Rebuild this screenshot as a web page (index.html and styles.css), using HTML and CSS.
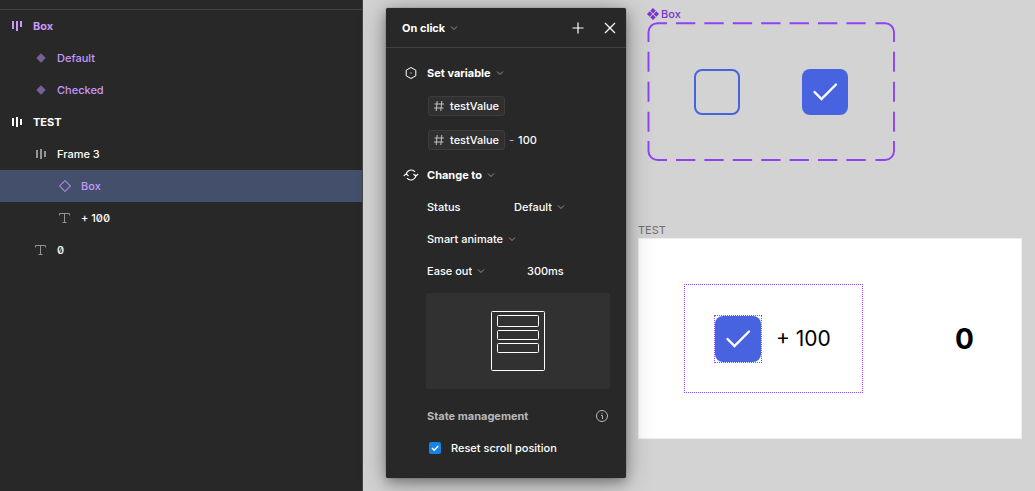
FILE: index.html
```html
<!DOCTYPE html>
<html lang="en">
<head>
<meta charset="utf-8">
<title>Prototype interaction</title>
<link rel="stylesheet" href="styles.css">
</head>
<body>
<svg class="defs" aria-hidden="true">
  <symbol id="chevron" viewBox="0 0 8 8"><path d="M1 2.5 4 5.5 7 2.5" fill="none" stroke="currentColor"/></symbol>
  <symbol id="bars-top" viewBox="0 0 16 16"><path d="M3 3h2v8H3zM7 3h2v10H7zM11 3h2v6h-2z" fill="currentColor"/></symbol>
  <symbol id="bars-mid" viewBox="0 0 16 16"><path d="M3 4h2v8H3zM7 3h2v10H7zM11 5h2v6h-2z" fill="currentColor"/></symbol>
  <symbol id="variant" viewBox="0 0 16 16"><path d="M8 3.3 12.7 8 8 12.7 3.3 8z" fill="currentColor"/></symbol>
  <symbol id="instance" viewBox="0 0 16 16"><path d="M8 2.6 13.4 8 8 13.4 2.6 8z" fill="none" stroke="currentColor" stroke-width="1.2"/></symbol>
  <symbol id="type" viewBox="0 0 16 16"><path d="M2.5 5.500v-2h10v2M7.500 3.500v9M5.500 12.500h4" fill="none" stroke="currentColor"/></symbol>
  <symbol id="number" viewBox="0 0 12 12"><path d="M4.2 1 3.2 11M8.8 1 7.8 11M1.5 4h9.5M1 8h9.5" fill="none" stroke="currentColor"/></symbol>
  <symbol id="tick" viewBox="0 0 46 46"><path d="m12.500 23 7 7L34 15.500" fill="none" stroke="#fff" stroke-width="2.400" stroke-linecap="round"/></symbol>
</svg>

<aside class="layers">
  <ul class="layer-list">
    <li class="layer component strong"><svg class="icon"><use href="#bars-top"/></svg><span>Box</span></li>
    <li class="layer component level-1"><svg class="icon dim"><use href="#variant"/></svg><span>Default</span></li>
    <li class="layer component level-1"><svg class="icon dim"><use href="#variant"/></svg><span>Checked</span></li>
    <li class="layer strong"><svg class="icon"><use href="#bars-mid"/></svg><span>TEST</span></li>
    <li class="layer level-1"><svg class="icon dim"><use href="#bars-mid"/></svg><span>Frame 3</span></li>
    <li class="layer component level-2 selected"><svg class="icon dim"><use href="#instance"/></svg><span>Box</span></li>
    <li class="layer level-2"><svg class="icon dim"><use href="#type"/></svg><span>+ 100</span></li>
    <li class="layer level-1"><svg class="icon dim"><use href="#type"/></svg><span>0</span></li>
  </ul>
</aside>

<main class="canvas">
  <section class="node set-node">
    <h2 class="node-label set-label">
      <svg class="set-icon" viewBox="0 0 12 12"><path d="M6 .2 8.500 2.700 6 5.200 3.500 2.700zM6 6.800l2.500 2.500L6 11.800 3.500 9.300zM2.700 3.500 5.200 6 2.700 8.500.2 6zM9.300 3.500 11.800 6 9.300 8.500 6.800 6z" fill="currentColor" stroke="currentColor" stroke-width=".4"/></svg>
      Box
    </h2>
    <div class="component-set">
      <svg class="set-outline" viewBox="0 0 249 140" fill="none" stroke="#8f42f2" stroke-width="1.900">
        <path d="M1.500 20V10A9 9 0 0 1 10.500 1.200H20M228.500 1.200H238A9 9 0 0 1 247 10V20M247 119V129A9 9 0 0 1 238 138H228.500M20 138H10.500A9 9 0 0 1 1.500 129V119"/>
        <path d="M29 1.200H219M29 138H219" stroke-dasharray="19.300 9.100"/>
        <path d="M1.500 29.700V111M247 29.700V111" stroke-dasharray="20 10"/>
      </svg>
      <div class="box"></div>
      <div class="box checked"><svg viewBox="0 0 46 46"><use href="#tick"/></svg></div>
    </div>
  </section>

  <section class="node frame-node">
    <h2 class="node-label">TEST</h2>
    <div class="frame">
      <div class="group">
        <div class="highlight"><div class="box checked"><svg viewBox="0 0 46 46"><use href="#tick"/></svg></div></div>
        <span class="amount">+ 100</span>
      </div>
      <span class="total">0</span>
    </div>
  </section>
</main>

<form class="dialog">
  <header class="dialog-head">
    <label class="picker strong"><select aria-label="Trigger"><option>On click</option></select><svg class="chevron"><use href="#chevron"/></svg></label>
    <button class="icon-button add" type="button" aria-label="Add action"><svg viewBox="0 0 16 16"><path d="M8 2.500v11M2.500 8h11" stroke="currentColor" stroke-width="1.200"/></svg></button>
    <button class="icon-button" type="button" aria-label="Close"><svg viewBox="0 0 16 16"><path d="m3 3 10 10M13 3 3 13" stroke="currentColor" stroke-width="1.200"/></svg></button>
  </header>
  <div class="dialog-body">
    <div class="row action">
      <svg class="icon" viewBox="0 0 16 16" fill="none" stroke="currentColor"><path d="M8 2.500 12.800 5.200v5.600L8 13.500 3.200 10.800V5.200z"/><path d="M7.500 7.500h1v1h-1z" fill="currentColor" stroke="none"/></svg>
      <label class="picker strong"><select aria-label="First action"><option>Set variable</option></select><svg class="chevron"><use href="#chevron"/></svg></label>
    </div>
    <div class="row expression">
      <button class="chip" type="button"><svg><use href="#number"/></svg>testValue</button>
    </div>
    <div class="row expression">
      <button class="chip" type="button"><svg><use href="#number"/></svg>testValue</button>
      <span class="operator">-</span>
      <span>100</span>
    </div>
    <div class="row action change">
      <svg class="icon" viewBox="0 0 16 16" fill="none" stroke="currentColor" stroke-width="1.100"><path d="M3.200 8V7.500A5 5 0 0 1 12 4.800M12.800 7.500V8A5 5 0 0 1 4 11.200M.8 9 3.200 6.700 5.500 9M15.200 7 12.800 9.300 10.500 7"/></svg>
      <label class="picker strong"><select aria-label="Second action"><option>Change to</option></select><svg class="chevron"><use href="#chevron"/></svg></label>
    </div>
    <div class="row fields">
      <label for="status">Status</label>
      <label class="picker"><select id="status"><option>Default</option></select><svg class="chevron"><use href="#chevron"/></svg></label>
    </div>
    <div class="row fields">
      <label class="picker"><select aria-label="Animation"><option>Smart animate</option></select><svg class="chevron"><use href="#chevron"/></svg></label>
    </div>
    <div class="row fields">
      <label class="picker"><select aria-label="Easing"><option>Ease out</option></select><svg class="chevron"><use href="#chevron"/></svg></label>
      <input class="duration" type="text" aria-label="Duration" value="300ms">
    </div>
    <div class="preview">
      <svg viewBox="0 0 54 60" fill="none" stroke="#fff"><rect x=".5" y=".5" width="53" height="59" rx="1"/><rect x="6.500" y="4.500" width="41" height="11" rx="1"/><rect x="6.500" y="19.500" width="41" height="9" rx="1"/><rect x="6.500" y="32.500" width="41" height="9" rx="1"/></svg>
    </div>
    <div class="row state">
      <h3>State management</h3>
      <button class="info" type="button" aria-label="About state management"><svg viewBox="0 0 16 16" fill="none" stroke="currentColor"><circle cx="8" cy="8" r="5.500"/><path d="M7 7.500h1.500V11M7.500 5.500h1"/></svg></button>
    </div>
    <label class="row reset">
      <span class="check"><input type="checkbox" checked><svg viewBox="0 0 12 12"><path d="m3 6 2.200 2.200L9.300 4" fill="none" stroke="#fff" stroke-width="1.500"/></svg></span>
      Reset scroll position
    </label>
  </div>
</form>
</body>
</html>
```
FILE: styles.css
```css
* { box-sizing: border-box; }

body {
  display: flex;
  position: relative;
  min-height: 100vh;
  margin: 0;
  overflow: hidden;
  background: #d3d3d3;
  color: #fff;
  font: 500 11px/16px Inter, sans-serif;
}

svg { display: block; flex: none; }
.defs { position: absolute; width: 0; height: 0; }
.icon { width: 16px; height: 16px; }
.strong { font-weight: 700; }

button, input, select {
  margin: 0;
  padding: 0;
  border: 0;
  background: none;
  color: inherit;
  font: inherit;
}

/* Layers panel */
.layers {
  flex: 0 0 363px;
  padding-top: 9px;
  border-right: 1px solid #444;
  background: #282828;
}
.layer-list {
  margin: 0;
  padding: 0;
  border-top: 1px solid #414141;
  list-style: none;
  font-variant-numeric: slashed-zero;
}
.layer {
  display: flex;
  align-items: center;
  gap: 8px;
  height: 32px;
  padding-left: 9px;
}
.level-1 { padding-left: 33px; }
.level-2 { padding-left: 57px; }
.component { color: #c799f8; }
.selected { background: #434f6b; }
.dim { opacity: .5; }
.selected .dim { opacity: .7; }

/* Canvas */
.canvas { position: relative; flex: 1; }
.node { position: absolute; }
.set-node { left: 284px; top: 6px; }
.frame-node { left: 275px; top: 222px; }
.node-label {
  display: flex;
  align-items: center;
  gap: 2px;
  margin: 0;
  color: #6e6e6e;
  font-size: 11px;
  font-weight: 400;
}
.set-label { color: #7a32cf; font-weight: 500; }
.set-icon { width: 12px; height: 12px; }
.component-set {
  display: flex;
  position: relative;
  align-items: center;
  justify-content: center;
  gap: 62px;
  width: 248px;
  height: 139px;
}
.set-outline { position: absolute; inset: 0; width: 249px; height: 140px; }
.box {
  width: 46px;
  height: 46px;
  border: 2px solid #4763e0;
  border-radius: 8px;
}
.checked { border: 0; background: #4763e0; }
.frame {
  display: flex;
  align-items: center;
  justify-content: space-between;
  width: 384px;
  height: 201px;
  padding: 0 47px 0 45px;
  border: 1px solid #eee;
  background: #fff;
  color: #000;
}
.group {
  display: flex;
  align-items: center;
  gap: 14px;
  height: 109px;
  padding: 0 31px 0 29px;
  border: 1px dotted #9747ff;
}
.highlight { border: 1px dotted #9747ff; }
.amount { font-size: 21px; font-weight: 400; line-height: 28px; }
.total { font-size: 28px; font-weight: 700; line-height: 32px; }

/* Interaction dialog */
.dialog {
  position: absolute;
  top: 8px;
  left: 386px;
  width: 240px;
  border-radius: 2px;
  background: #282828;
  box-shadow: 0 0 1px rgba(0, 0, 0, .6), 0 4px 12px rgba(0, 0, 0, .3), 0 4px 28px rgba(0, 0, 0, .3);
}
.dialog-head {
  display: flex;
  align-items: center;
  height: 40px;
  padding: 0 8px 0 16px;
  border-bottom: 1px solid #414141;
}
.picker { display: flex; align-items: center; gap: 5px; }
.picker select { appearance: none; field-sizing: content; }
.chevron { width: 8px; height: 8px; opacity: .5; }
.icon-button { padding: 0; }
.icon-button svg { width: 16px; height: 16px; }
.add { margin: 0 16px 0 auto; }
.dialog-body { padding: 9px 16px 14px; }
.row { display: flex; align-items: center; min-height: 32px; }
.action { gap: 8px; padding-left: 1px; }
.change { margin-top: 2px; }
.expression { gap: 4px; min-height: 34px; padding-left: 26px; }
.chip {
  display: flex;
  align-items: center;
  gap: 5px;
  height: 20px;
  padding: 0 5px 0 4px;
  border: 1px solid #3d3d3d;
  border-radius: 3px;
  background: #303030;
}
.chip svg { width: 12px; height: 12px; opacity: .7; }
.operator { color: #f78fc4; }
.fields { display: grid; grid-template-columns: 87px 1fr; padding-left: 25px; }
.fields > :only-child { grid-column: 1 / -1; }
.duration { width: 64px; margin-left: 13px; }
.preview {
  display: grid;
  place-items: center;
  height: 96px;
  margin: 6px 0 11px 24px;
  border-radius: 2px;
  background: #313131;
}
.preview svg { width: 54px; height: 60px; }
.state { justify-content: space-between; padding-left: 25px; color: #b8b8b8; }
.state h3 { margin: 0; font-size: 11px; font-weight: 700; }
.info svg { width: 16px; height: 16px; }
.reset { gap: 10px; padding-left: 27px; }
.check { display: grid; }
.check > * { grid-area: 1 / 1; width: 12px; height: 12px; }
.check input { appearance: none; border-radius: 2px; background: #1583e6; }
.check svg { pointer-events: none; z-index: 1; }
```
